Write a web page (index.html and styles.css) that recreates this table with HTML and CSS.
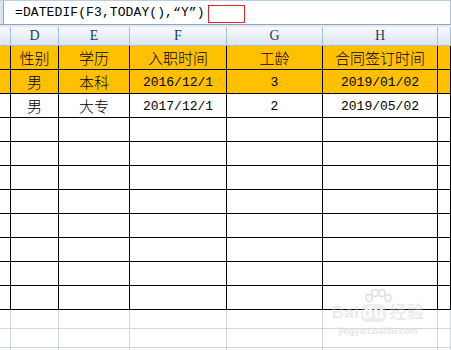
FILE: index.html
```html
<!DOCTYPE html>
<html lang="zh">
<head>
<meta charset="utf-8">
<link rel="stylesheet" href="styles.css">
</head>
<body>
<div class="sheet">
  <div class="fbar">
    <div class="fbar-left"></div>
    <div class="ftext"><span class="formula">=DATEDIF(F3,TODAY(),“Y”)</span><span class="cursor"></span></div>
  </div>
  <div class="strip"></div>
  <div class="grid colhead">
    <div class="hc"></div>
    <div class="hc">D</div>
    <div class="hc">E</div>
    <div class="hc">F</div>
    <div class="hc">G</div>
    <div class="hc">H</div>
    <div class="hc"></div>
  </div>
  <div class="grid row yellow">
    <div class="c"></div>
    <div class="c cjk">性别</div>
    <div class="c cjk">学历</div>
    <div class="c cjk">入职时间</div>
    <div class="c cjk">工龄</div>
    <div class="c cjk">合同签订时间</div>
    <div class="c"></div>
  </div>
  <div class="grid row yellow">
    <div class="c"></div>
    <div class="c cjk">男</div>
    <div class="c cjk">本科</div>
    <div class="c num">2016/12/1</div>
    <div class="c num">3</div>
    <div class="c num">2019/01/02</div>
    <div class="c"></div>
  </div>
  <div class="grid row">
    <div class="c"></div>
    <div class="c cjk">男</div>
    <div class="c cjk">大专</div>
    <div class="c num">2017/12/1</div>
    <div class="c num">2</div>
    <div class="c num">2019/05/02</div>
    <div class="c"></div>
  </div>
  <div class="grid row"><div class="c"></div><div class="c"></div><div class="c"></div><div class="c"></div><div class="c"></div><div class="c"></div><div class="c"></div></div>
  <div class="grid row"><div class="c"></div><div class="c"></div><div class="c"></div><div class="c"></div><div class="c"></div><div class="c"></div><div class="c"></div></div>
  <div class="grid row"><div class="c"></div><div class="c"></div><div class="c"></div><div class="c"></div><div class="c"></div><div class="c"></div><div class="c"></div></div>
  <div class="grid row"><div class="c"></div><div class="c"></div><div class="c"></div><div class="c"></div><div class="c"></div><div class="c"></div><div class="c"></div></div>
  <div class="grid row"><div class="c"></div><div class="c"></div><div class="c"></div><div class="c"></div><div class="c"></div><div class="c"></div><div class="c"></div></div>
  <div class="grid row"><div class="c"></div><div class="c"></div><div class="c"></div><div class="c"></div><div class="c"></div><div class="c"></div><div class="c"></div></div>
  <div class="grid row"><div class="c"></div><div class="c"></div><div class="c"></div><div class="c"></div><div class="c"></div><div class="c"></div><div class="c"></div></div>
  <div class="grid row"><div class="c"></div><div class="c"></div><div class="c"></div><div class="c"></div><div class="c"></div><div class="c"></div><div class="c"></div></div>
  <div class="grid lrow"><div class="l"></div><div class="l"></div><div class="l"></div><div class="l"></div><div class="l"></div><div class="l"></div><div class="l"></div></div>
  <div class="grid lrow"><div class="l"></div><div class="l"></div><div class="l"></div><div class="l"></div><div class="l"></div><div class="l"></div><div class="l"></div></div>
  <div class="grid lrow"><div class="l"></div><div class="l"></div><div class="l"></div><div class="l"></div><div class="l"></div><div class="l"></div><div class="l"></div></div>

  <div class="watermark">
    <svg class="paw" width="30" height="18" viewBox="0 0 30 18">
      <g fill="none" stroke="#dcdcdc" stroke-width="1.3">
        <ellipse cx="6" cy="10" rx="3" ry="3.5"/>
        <ellipse cx="12" cy="5" rx="3" ry="3.5"/>
        <ellipse cx="19" cy="5" rx="3" ry="3.5"/>
        <ellipse cx="25" cy="10" rx="3" ry="3.5"/>
      </g>
    </svg>
    <div class="wm-main">Bai<span class="wm-du">du</span>经验</div>
    <div class="wm-sub">jingyan.baidu.com</div>
  </div>
</div>
</body>
</html>
```

FILE: styles.css
```css
* { box-sizing: border-box; }
html, body { margin: 0; padding: 0; background: #fff; }
.sheet { position: relative; width: 451px; height: 350px; overflow: hidden; }

.fbar {
  display: flex;
  height: 25px;
  border-top: 1px solid #b9cde4;
  border-bottom: 1px solid #8da2bc;
  border-right: 1px solid #a9bdd6;
  background: #fff;
}
.fbar-left {
  width: 4px;
  background: #dbe5f1;
  border-right: 1px solid #97a9c0;
}
.ftext {
  display: flex;
  align-items: center;
  padding-left: 11px;
}
.formula {
  font-family: "Liberation Mono", monospace;
  font-size: 13px;
  color: #000;
  letter-spacing: 0.1px;
}
.cursor {
  display: inline-block;
  width: 37px;
  height: 18px;
  margin-left: 3px;
  margin-top: 2px;
  border: 1px solid #e0262c;
}
.strip { height: 2px; background: #e4eaf2; }

.grid {
  display: grid;
  grid-template-columns: 11px 48px 71px 97px 96px 115px 1fr;
}
.colhead {
  height: 19px;
  background: linear-gradient(#f7f9fc, #dde5ef);
  border-bottom: 1px solid #a9bdd3;
}
.hc {
  border-right: 1px solid #a9bdd3;
  display: flex;
  align-items: center;
  justify-content: center;
  font-family: "Liberation Serif", serif;
  font-size: 14px;
  color: #2a3a52;
}
.row { height: 24px; }
.row.yellow { background: #ffc000; }
.c {
  border-right: 1px solid #000;
  border-bottom: 1px solid #000;
  display: flex;
  align-items: center;
  justify-content: center;
  color: #000;
}
.cjk {
  font-family: "Noto Sans CJK SC", sans-serif;
  font-size: 15px;
  font-weight: 300;
}
.num {
  font-family: "Liberation Mono", monospace;
  font-size: 13px;
  padding-top: 1px;
}
.lrow { height: 19px; }
.l {
  border-right: 1px solid #d0d7e5;
  border-bottom: 1px solid #d0d7e5;
}

.watermark {
  position: absolute;
  left: 328px;
  top: 288px;
  width: 100px;
  display: flex;
  flex-direction: column;
  align-items: center;
  pointer-events: none;
  white-space: nowrap;
}
.wm-main {
  margin-top: -2px;
  line-height: 18px;
  font-family: "Liberation Sans", "Noto Sans CJK SC", sans-serif;
  font-size: 17px;
  font-weight: 700;
  color: rgba(210, 210, 210, 0.45);
  letter-spacing: 0.5px;
}
.wm-du {
  display: inline-block;
  background: rgba(210, 210, 210, 0.4);
  color: #fff;
  border-radius: 6px;
  padding: 0 2px;
  margin: 0 3px 0 1px;
}
.wm-sub {
  margin-top: 4px;
  line-height: 11px;
  font-family: "Liberation Sans", sans-serif;
  font-size: 9px;
  font-weight: 700;
  color: rgba(210, 210, 210, 0.6);
}
```
